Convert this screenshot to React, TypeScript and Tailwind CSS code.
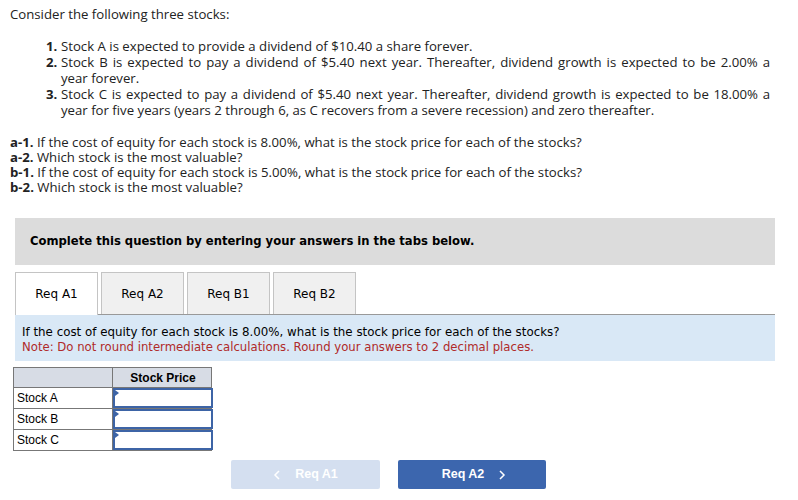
import React from "react";

const body = "font-['Open_Sans','Lato',sans-serif]";
const verdana = "font-['DejaVu_Sans','Verdana',sans-serif]";
const arial = "font-['Liberation_Sans','Arial',sans-serif]";

function PriceInput() {
  return (
    <div className="relative h-full border-2 border-[#3d64a6] bg-white">
      <span className="absolute left-0 top-0 h-0 w-0 border-y-[3px] border-l-[4px] border-y-transparent border-l-[#3d64a6]" />
    </div>
  );
}

function Item({ n, first, rest }: { n: string; first: string; rest?: string }) {
  return (
    <li className="flex">
      <b className="w-[13px] shrink-0">{n}</b>
      <div className="pl-[2px] flex-1">
        <span className={rest ? "block text-justify [text-align-last:justify]" : "block"}>{first}</span>
        {rest && <span className="block">{rest}</span>}
      </div>
    </li>
  );
}

export default function App() {
  const rows = ["Stock A", "Stock B", "Stock C"];
  return (
    <div className="w-[798px] h-[500px] bg-white text-[#222] overflow-hidden">
      <div className={`${body} text-[13.2px] leading-[16px] pl-[10px] pr-[28px] pt-[6px]`}>
        <p>Consider the following three stocks:</p>
        <ol className="mt-[16px] pl-[36px]">
          <Item n="1." first="Stock A is expected to provide a dividend of $10.40 a share forever." />
          <Item
            n="2."
            first="Stock B is expected to pay a dividend of $5.40 next year. Thereafter, dividend growth is expected to be 2.00% a"
            rest="year forever."
          />
          <Item
            n="3."
            first="Stock C is expected to pay a dividend of $5.40 next year. Thereafter, dividend growth is expected to be 18.00% a"
            rest="year for five years (years 2 through 6, as C recovers from a severe recession) and zero thereafter."
          />
        </ol>
        <div className="mt-[17px] leading-[15px]">
          <p><b>a-1.</b> If the cost of equity for each stock is 8.00%, what is the stock price for each of the stocks?</p>
          <p><b>a-2.</b> Which stock is the most valuable?</p>
          <p><b>b-1.</b> If the cost of equity for each stock is 5.00%, what is the stock price for each of the stocks?</p>
          <p><b>b-2.</b> Which stock is the most valuable?</p>
        </div>
      </div>

      <div className="mx-[15px] w-[760px] mt-[23px]">
        <div className={`${verdana} bg-[#dcdcdc] h-[47px] flex items-center pl-[15px] text-[11.6px] font-bold text-black`}>
          Complete this question by entering your answers in the tabs below.
        </div>

        <div className={`${verdana} mt-[7px] flex gap-[3px] border-b border-[#999] text-[12px] text-black`}>
          <div className="w-[83px] h-[43px] -mb-px bg-white border border-b-0 border-[#c4c4c4] flex items-center justify-center">Req A1</div>
          <div className="w-[83px] h-[42px] bg-[#f0f0f0] border border-b-0 border-[#c4c4c4] flex items-center justify-center">Req A2</div>
          <div className="w-[83px] h-[42px] bg-[#f0f0f0] border border-b-0 border-[#c4c4c4] flex items-center justify-center">Req B1</div>
          <div className="w-[83px] h-[42px] bg-[#f0f0f0] border border-b-0 border-[#c4c4c4] flex items-center justify-center">Req B2</div>
        </div>

        <div className={`${verdana} bg-[#d9e8f6] h-[46px] pl-[7px] pt-[10px] text-[11.85px] leading-[15px]`}>
          <p className="text-black">If the cost of equity for each stock is 8.00%, what is the stock price for each of the stocks?</p>
          <p className="text-[#b02a2a] text-[11.7px]">Note: Do not round intermediate calculations. Round your answers to 2 decimal places.</p>
        </div>
      </div>

      <div className={`${arial} ml-[13px] mt-[6px] w-[199px] text-[12px] text-black`}>
        <div className="grid grid-cols-[99px_100px] border border-[#777] bg-[#d7dce5] h-[21px]">
          <div className="border-r border-[#777]" />
          <div className="flex items-center justify-center font-bold">Stock Price</div>
        </div>
        {rows.map((r) => (
          <div key={r} className="grid grid-cols-[99px_100px] border border-t-0 border-[#777] h-[21px]">
            <div className="border-r border-[#777] flex items-center pl-[3px]">{r}</div>
            <PriceInput />
          </div>
        ))}
      </div>

      <div className={`${arial} mt-[9px] ml-[231px] flex gap-[18px] text-[12.5px] font-bold text-white`}>
        <div className="w-[149px] h-[29px] rounded-[2px] bg-[#d4dff0] flex items-center justify-center gap-[14px]">
          <svg width="8" height="10" viewBox="0 0 8 10" fill="none" stroke="white" strokeWidth="1.5"><path d="M6 1 L2 5 L6 9" /></svg>
          <span>Req A1</span>
        </div>
        <div className="w-[148px] h-[29px] rounded-[2px] bg-[#3c66ae] flex items-center justify-center gap-[14px] pl-[4px]">
          <span>Req A2</span>
          <svg width="8" height="10" viewBox="0 0 8 10" fill="none" stroke="white" strokeWidth="1.5"><path d="M2 1 L6 5 L2 9" /></svg>
        </div>
      </div>
    </div>
  );
}
